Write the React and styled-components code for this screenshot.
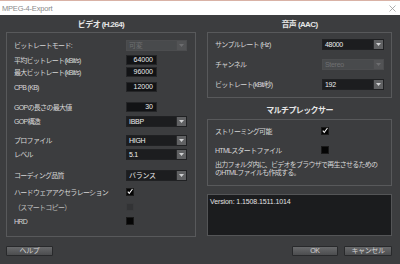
import React from 'react';
import styled, { createGlobalStyle } from 'styled-components';

const GlobalStyle = createGlobalStyle`
  html, body {
    margin: 0;
    padding: 0;
    background: #3c3d3f;
  }
  * {
    box-sizing: border-box;
  }
`;

const FONT = '"Liberation Sans", "Noto Sans CJK JP", sans-serif';

const Window = styled.div`
  width: 400px;
  height: 264px;
  display: flex;
  flex-direction: column;
  background: #3c3d3f;
  font-family: ${FONT};
  color: #d6d6d6;
  overflow: hidden;
`;

const TitleBar = styled.div`
  height: 15px;
  flex: 0 0 15px;
  background: #ffffff;
  border-top: 1px solid #d9b2a6;
  display: flex;
  align-items: center;
  justify-content: space-between;
  padding: 0 4px 0 2px;
`;

const Title = styled.span`
  font-size: 7.5px;
  color: #8a8a8a;
  letter-spacing: -0.2px;
`;

const Body = styled.div`
  flex: 1;
  display: flex;
  flex-direction: column;
  padding: 0 8px 0 6px;
`;

const Columns = styled.div`
  display: flex;
  align-items: flex-start;
  gap: 11px;
`;

const Column = styled.div`
  width: ${p => p.$width}px;
  display: flex;
  flex-direction: column;
`;

const Heading = styled.div`
  height: ${p => p.$height}px;
  display: flex;
  align-items: center;
  justify-content: center;
  padding-top: ${p => p.$pt || 0}px;
  font-size: 8px;
  font-weight: bold;
  color: #e6e6e6;
  letter-spacing: -0.6px;
`;

const Group = styled.div`
  height: ${p => p.$height}px;
  border: 1px solid #58595b;
  padding-left: 7px;
  display: flex;
  flex-direction: column;
`;

const Row = styled.div`
  height: 12px;
  margin-top: ${p => p.$mt}px;
  display: grid;
  grid-template-columns: ${p => p.$label}px auto;
  align-items: center;
`;

const Label = styled.span`
  font-size: 7px;
  letter-spacing: -0.7px;
  color: ${p => (p.$dim ? '#bdbdbd' : '#d6d6d6')};
  white-space: nowrap;
`;

const NumberInput = styled.div`
  width: 31px;
  height: 10px;
  background: #121315;
  border: 1px solid #242527;
  font-size: 7px;
  color: #ececec;
  text-align: right;
  padding-right: 3px;
  line-height: 8px;
`;

const Select = styled.div`
  width: ${p => p.$width}px;
  height: 11px;
  display: flex;
  background: ${p => (p.$disabled ? '#484a4c' : '#1c1d1f')};
  border: 1px solid ${p => (p.$disabled ? '#4c4d4f' : '#202123')};
`;

const SelectValue = styled.span`
  flex: 1;
  font-size: 7px;
  line-height: 9px;
  padding-left: 2px;
  letter-spacing: -0.3px;
  color: ${p => (p.$disabled ? '#6f7072' : '#ededed')};
`;

const SelectArrow = styled.span`
  width: 10px;
  display: flex;
  align-items: center;
  justify-content: center;
  background: ${p => (p.$disabled ? '#525355' : '#606163')};
  border-left: 1px solid ${p => (p.$disabled ? '#4a4b4d' : '#2a2b2d')};
`;

const Box = styled.span`
  width: 8px;
  height: 8px;
  display: flex;
  align-items: center;
  justify-content: center;
  background: ${p => (p.$disabled ? '#323335' : '#050505')};
  border: 1px solid ${p => (p.$disabled ? '#3a3b3d' : '#1a1a1a')};
  overflow: visible;
`;

const Description = styled.p`
  margin: 5px 0 0 0;
  font-size: 7px;
  line-height: 8px;
  letter-spacing: -0.75px;
  color: #d6d6d6;
`;

const VersionBox = styled.div`
  margin-top: 8px;
  height: 42px;
  background: #1b1c1e;
  border: 1px solid #545557;
  padding: 3px 2px;
  font-size: 7px;
  color: #e2e2e2;
  letter-spacing: -0.1px;
`;

const Footer = styled.div`
  margin-top: 9px;
  display: flex;
  align-items: center;
`;

const Spacer = styled.div`
  flex: 1;
`;

const Button = styled.button`
  width: ${p => p.$width}px;
  height: 10px;
  margin-left: ${p => p.$ml || 0}px;
  padding: 0;
  font-family: ${FONT};
  font-size: 7px;
  line-height: 8px;
  letter-spacing: -0.4px;
  color: #d2d2d2;
  background: linear-gradient(#68696b, #4c4d4f);
  border: 1px solid #28292b;
  border-radius: 1px;
`;

const Dropdown = ({ value, width = 61, disabled }) => (
  <Select $width={width} $disabled={disabled}>
    <SelectValue $disabled={disabled}>{value}</SelectValue>
    <SelectArrow $disabled={disabled}>
      <svg width="5" height="3" viewBox="0 0 5 3">
        <path d="M0 0h5L2.5 3z" fill={disabled ? '#6c6d6f' : '#cfd0d2'} />
      </svg>
    </SelectArrow>
  </Select>
);

const Checkbox = ({ checked, disabled }) => (
  <Box $disabled={disabled}>
    {checked && (
      <svg width="9" height="9" viewBox="0 0 9 9" style={{ marginTop: -2 }}>
        <path d="M1.2 4.8 L3.4 7.4 L8.2 0.8" fill="none" stroke="#f2f2f2" strokeWidth="1.6" />
      </svg>
    )}
  </Box>
);

const videoRows = [
  { label: 'ビットレートモード:', mt: 6, control: <Dropdown value="可変" disabled /> },
  { label: '平均ビットレート(kBit/s)', mt: 3, control: <NumberInput>64000</NumberInput> },
  { label: '最大ビットレート(kBit/s)', mt: 0, control: <NumberInput>96000</NumberInput> },
  { label: 'CPB (KB)', mt: 3, control: <NumberInput>12000</NumberInput> },
  { label: 'GOPの長さの最大値', mt: 8, control: <NumberInput>30</NumberInput> },
  { label: 'GOP構造', mt: 2, control: <Dropdown value="IBBP" /> },
  { label: 'プロファイル', mt: 7, control: <Dropdown value="HIGH" /> },
  { label: 'レベル', mt: 2, control: <Dropdown value="5.1" /> },
  { label: 'コーディング品質', mt: 9, control: <Dropdown value="バランス" /> },
  { label: 'ハードウェアアクセラレーション', mt: 5, control: <Checkbox checked /> },
  { label: '（スマートコピー）', mt: 3, control: <Checkbox disabled />, dim: true },
  { label: 'HRD', mt: 2, control: <Checkbox /> },
];

const audioRows = [
  { label: 'サンプルレート (Hz)', mt: 5, control: <Dropdown value="48000" width={62} /> },
  { label: 'チャンネル', mt: 8, control: <Dropdown value="Stereo" width={62} disabled /> },
  { label: 'ビットレート(kBit/秒)', mt: 8, control: <Dropdown value="192" width={62} /> },
];

const muxRows = [
  { label: 'ストリーミング可能', mt: 5, control: <Checkbox checked /> },
  { label: 'HTMLスタートファイル', mt: 7, control: <Checkbox /> },
];

const renderRows = (rows, labelWidth) => rows.map(row => (
  <Row key={row.label} $mt={row.mt} $label={labelWidth}>
    <Label $dim={row.dim}>{row.label}</Label>
    {row.control}
  </Row>
));

const App = () => (
  <Window>
    <GlobalStyle />
    <TitleBar>
      <Title>MPEG-4-Export</Title>
      <svg width="7" height="7" viewBox="0 0 7 7">
        <path d="M0.5 0.5L6.5 6.5M6.5 0.5L0.5 6.5" stroke="#9a9a9a" strokeWidth="0.8" />
      </svg>
    </TitleBar>
    <Body>
      <Columns>
        <Column $width={190}>
          <Heading $height={17}>ビデオ (H.264)</Heading>
          <Group $height={205}>{renderRows(videoRows, 112)}</Group>
        </Column>
        <Column $width={185}>
          <Heading $height={17}>音声 (AAC)</Heading>
          <Group $height={66}>{renderRows(audioRows, 107)}</Group>
          <Heading $height={21} $pt={1}>マルチプレックサー</Heading>
          <Group $height={67}>
            {renderRows(muxRows, 106)}
            <Description>
              出力フォルダ内に、ビデオをブラウザで再生させるための
              <br />
              のHTMLファイルも作成する。
            </Description>
          </Group>
          <VersionBox>Version: 1.1508.1511.1014</VersionBox>
        </Column>
      </Columns>
      <Footer>
        <Button $width={47}>ヘルプ</Button>
        <Spacer />
        <Button $width={46}>OK</Button>
        <Button $width={48} $ml={6}>キャンセル</Button>
      </Footer>
    </Body>
  </Window>
);

export default App;
